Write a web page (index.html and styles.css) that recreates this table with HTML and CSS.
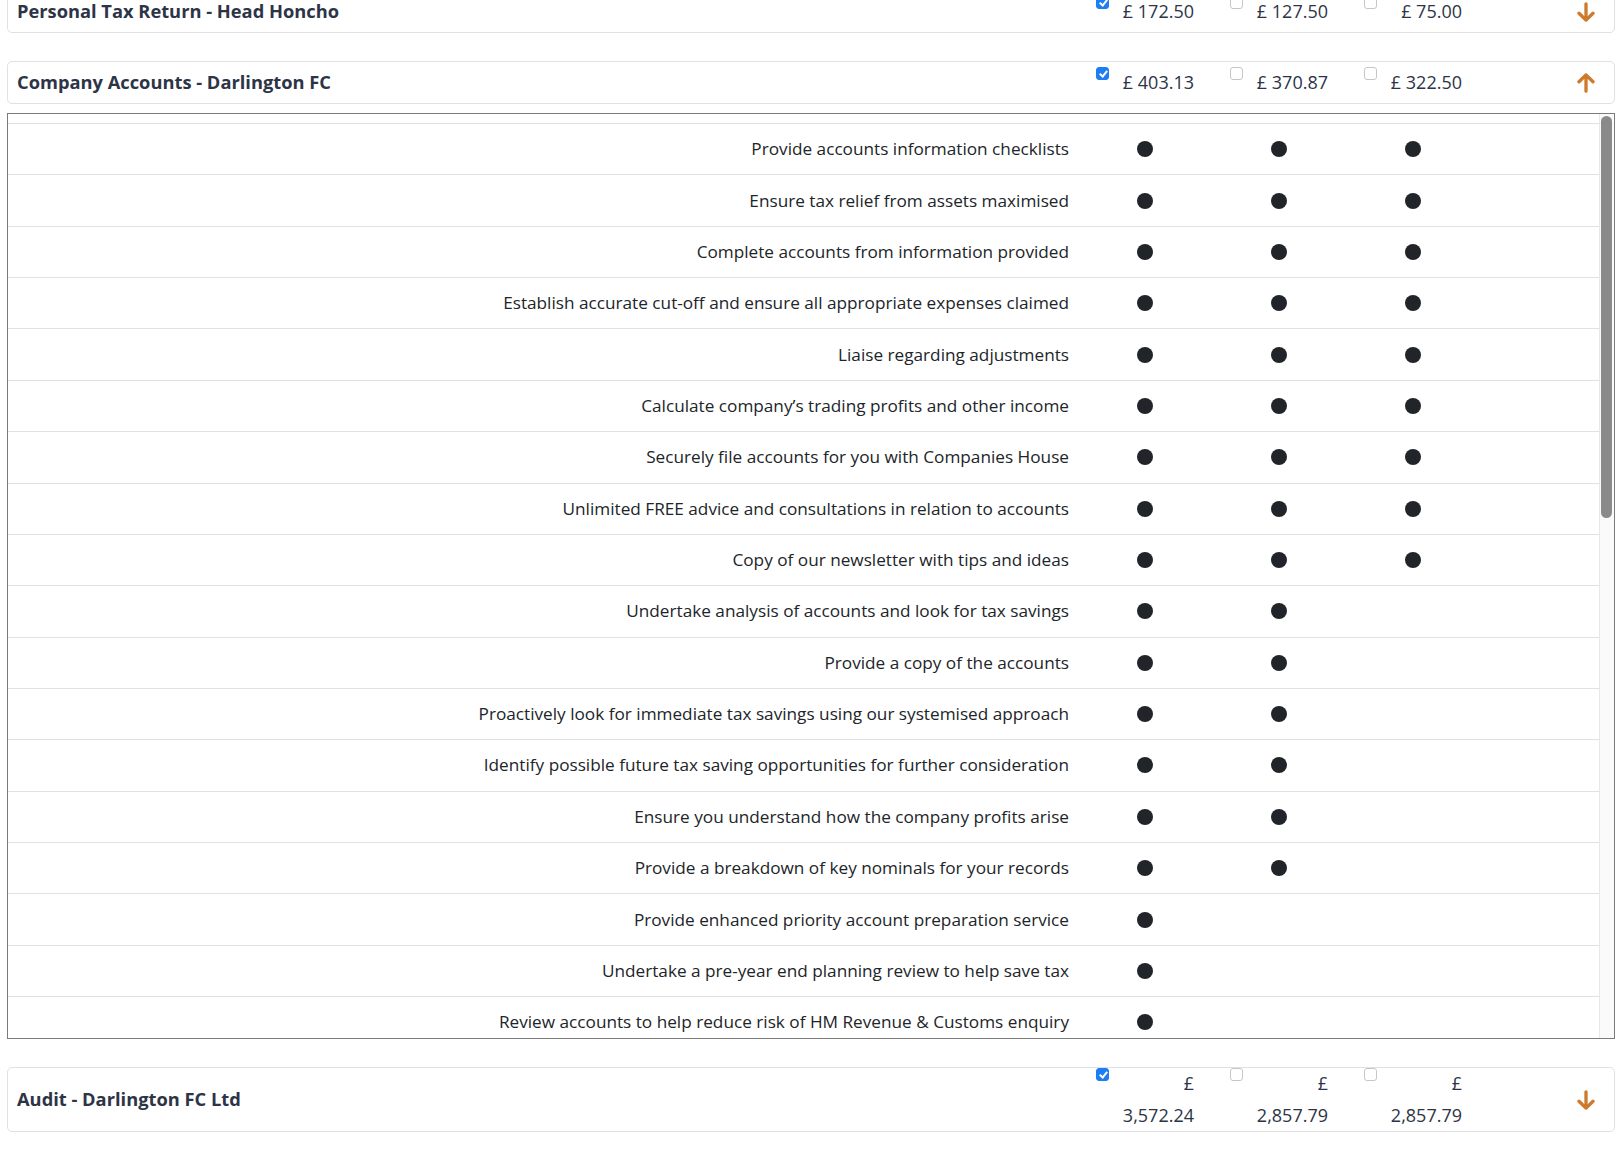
FILE: index.html
```html
<!DOCTYPE html>
<html lang="en">
<head>
<meta charset="utf-8">
<title>Services</title>
<link rel="stylesheet" href="styles.css">
</head>
<body>
<div class="page">

  <section class="service">
    <div class="service-head">
      <h3 class="service-title">Personal Tax Return - Head Honcho</h3>
      <label class="option"><input type="checkbox" checked><span class="price">£ 172.50</span></label>
      <label class="option"><input type="checkbox"><span class="price">£ 127.50</span></label>
      <label class="option"><input type="checkbox"><span class="price">£ 75.00</span></label>
      <button class="toggle" type="button" aria-label="Expand">
        <svg viewBox="0 0 18 20" width="18" height="20"><path d="M9 1.8V18.1M2 11.2 9 18.1 16 11.2" fill="none" stroke="currentColor" stroke-width="3.3" stroke-linecap="round" stroke-linejoin="round"/></svg>
      </button>
    </div>
  </section>

  <section class="service">
    <div class="service-head">
      <h3 class="service-title">Company Accounts - Darlington FC</h3>
      <label class="option"><input type="checkbox" checked><span class="price">£ 403.13</span></label>
      <label class="option"><input type="checkbox"><span class="price">£ 370.87</span></label>
      <label class="option"><input type="checkbox"><span class="price">£ 322.50</span></label>
      <button class="toggle" type="button" aria-label="Collapse">
        <svg viewBox="0 0 18 20" width="18" height="20"><path d="M9 18.2V1.9M2 8.8 9 1.9 16 8.8" fill="none" stroke="currentColor" stroke-width="3.3" stroke-linecap="round" stroke-linejoin="round"/></svg>
      </button>
    </div>
    <div class="features">
      <div class="feature-list">
        <div class="feature-head"></div>
        <div class="feature"><div class="feature-name">Provide accounts information checklists</div><div class="mark"><span class="dot"></span></div><div class="mark"><span class="dot"></span></div><div class="mark"><span class="dot"></span></div></div>
        <div class="feature"><div class="feature-name">Ensure tax relief from assets maximised</div><div class="mark"><span class="dot"></span></div><div class="mark"><span class="dot"></span></div><div class="mark"><span class="dot"></span></div></div>
        <div class="feature"><div class="feature-name">Complete accounts from information provided</div><div class="mark"><span class="dot"></span></div><div class="mark"><span class="dot"></span></div><div class="mark"><span class="dot"></span></div></div>
        <div class="feature"><div class="feature-name">Establish accurate cut-off and ensure all appropriate expenses claimed</div><div class="mark"><span class="dot"></span></div><div class="mark"><span class="dot"></span></div><div class="mark"><span class="dot"></span></div></div>
        <div class="feature"><div class="feature-name">Liaise regarding adjustments</div><div class="mark"><span class="dot"></span></div><div class="mark"><span class="dot"></span></div><div class="mark"><span class="dot"></span></div></div>
        <div class="feature"><div class="feature-name">Calculate company’s trading profits and other income</div><div class="mark"><span class="dot"></span></div><div class="mark"><span class="dot"></span></div><div class="mark"><span class="dot"></span></div></div>
        <div class="feature"><div class="feature-name">Securely file accounts for you with Companies House</div><div class="mark"><span class="dot"></span></div><div class="mark"><span class="dot"></span></div><div class="mark"><span class="dot"></span></div></div>
        <div class="feature"><div class="feature-name">Unlimited FREE advice and consultations in relation to accounts</div><div class="mark"><span class="dot"></span></div><div class="mark"><span class="dot"></span></div><div class="mark"><span class="dot"></span></div></div>
        <div class="feature"><div class="feature-name">Copy of our newsletter with tips and ideas</div><div class="mark"><span class="dot"></span></div><div class="mark"><span class="dot"></span></div><div class="mark"><span class="dot"></span></div></div>
        <div class="feature"><div class="feature-name">Undertake analysis of accounts and look for tax savings</div><div class="mark"><span class="dot"></span></div><div class="mark"><span class="dot"></span></div><div class="mark"></div></div>
        <div class="feature"><div class="feature-name">Provide a copy of the accounts</div><div class="mark"><span class="dot"></span></div><div class="mark"><span class="dot"></span></div><div class="mark"></div></div>
        <div class="feature"><div class="feature-name">Proactively look for immediate tax savings using our systemised approach</div><div class="mark"><span class="dot"></span></div><div class="mark"><span class="dot"></span></div><div class="mark"></div></div>
        <div class="feature"><div class="feature-name">Identify possible future tax saving opportunities for further consideration</div><div class="mark"><span class="dot"></span></div><div class="mark"><span class="dot"></span></div><div class="mark"></div></div>
        <div class="feature"><div class="feature-name">Ensure you understand how the company profits arise</div><div class="mark"><span class="dot"></span></div><div class="mark"><span class="dot"></span></div><div class="mark"></div></div>
        <div class="feature"><div class="feature-name">Provide a breakdown of key nominals for your records</div><div class="mark"><span class="dot"></span></div><div class="mark"><span class="dot"></span></div><div class="mark"></div></div>
        <div class="feature"><div class="feature-name">Provide enhanced priority account preparation service</div><div class="mark"><span class="dot"></span></div><div class="mark"></div><div class="mark"></div></div>
        <div class="feature"><div class="feature-name">Undertake a pre-year end planning review to help save tax</div><div class="mark"><span class="dot"></span></div><div class="mark"></div><div class="mark"></div></div>
        <div class="feature"><div class="feature-name">Review accounts to help reduce risk of HM Revenue &amp; Customs enquiry</div><div class="mark"><span class="dot"></span></div><div class="mark"></div><div class="mark"></div></div>
      </div>
      <div class="scrollbar"><div class="scroll-thumb"></div></div>
    </div>
  </section>

  <section class="service">
    <div class="service-head">
      <h3 class="service-title">Audit - Darlington FC Ltd</h3>
      <label class="option"><input type="checkbox" checked><span class="price">£ 3,572.24</span></label>
      <label class="option"><input type="checkbox"><span class="price">£ 2,857.79</span></label>
      <label class="option"><input type="checkbox"><span class="price">£ 2,857.79</span></label>
      <button class="toggle" type="button" aria-label="Expand">
        <svg viewBox="0 0 18 20" width="18" height="20"><path d="M9 1.8V18.1M2 11.2 9 18.1 16 11.2" fill="none" stroke="currentColor" stroke-width="3.3" stroke-linecap="round" stroke-linejoin="round"/></svg>
      </button>
    </div>
  </section>

</div>
</body>
</html>
```

FILE: styles.css
```css
html, body {
  margin: 0;
  background: #ffffff;
}

body {
  font-family: "Open Sans", "Noto Sans", sans-serif;
  color: #212529;
}

.page {
  margin-top: -10px;
  padding: 0 9px 0 7px;
}

.service + .service {
  margin-top: 28px;
}

.service-head {
  display: flex;
  align-items: center;
  border: 1px solid #dfe1e5;
  border-radius: 5px;
  padding: 0 19px 0 9px;
}

.service-title {
  flex: 1;
  margin: 0;
  padding: 7px 0 9px;
  font-size: 18.3px;
  line-height: 25px;
  font-weight: 700;
  color: #2d3446;
}

.option {
  display: flex;
  align-items: flex-start;
  gap: 4px;
  width: 98px;
  margin-left: 36px;
}

.option input {
  appearance: none;
  -webkit-appearance: none;
  flex: none;
  position: relative;
  width: 13px;
  height: 13px;
  margin: 0;
  border: 1px solid #c6c6c6;
  border-radius: 3px;
  background: #ffffff;
  box-sizing: border-box;
}

.option input:checked {
  background: #1d7df2;
  border-color: #1d7df2;
}

.option input:checked::after {
  content: "";
  position: absolute;
  left: 3.5px;
  top: 1px;
  width: 3px;
  height: 6px;
  border: solid #ffffff;
  border-width: 0 2px 2px 0;
  transform: rotate(40deg);
}

.price {
  flex: 1;
  text-align: right;
  font-size: 18px;
  line-height: 1.75;
  color: #2d3446;
}

.toggle {
  display: flex;
  flex: none;
  width: 18px;
  height: 20px;
  margin-left: 115px;
  padding: 0;
  border: 0;
  background: none;
  color: #cd7a2d;
}

.features {
  display: flex;
  height: 926px;
  box-sizing: border-box;
  margin-top: 9px;
  margin-bottom: 3px;
  border: 1px solid #7b7b7b;
  overflow: hidden;
}

.feature-list {
  flex: 1;
  min-width: 0;
  overflow: hidden;
}

.scrollbar {
  flex: none;
  width: 15px;
  box-sizing: border-box;
  padding: 2px 2px 0 1px;
  border-left: 1px solid #e8e8e8;
  background: #fafafa;
}

.scroll-thumb {
  height: 402px;
  border-radius: 6px;
  background: #8a8a8a;
}

.feature-head {
  height: 9px;
  border-bottom: 1px solid #dee2e6;
}

.feature {
  display: flex;
  align-items: center;
  height: 51.36px;
  box-sizing: border-box;
  padding-right: 137px;
  border-bottom: 1px solid #dee2e6;
}

.feature-name {
  flex: 1;
  padding-right: 27px;
  text-align: right;
  font-size: 17.2px;
  line-height: 24px;
  color: #212529;
}

.mark {
  display: flex;
  justify-content: center;
  width: 98px;
}

.mark + .mark {
  margin-left: 36px;
}

.dot {
  width: 16px;
  height: 16px;
  border-radius: 50%;
  background: #212529;
}
```
